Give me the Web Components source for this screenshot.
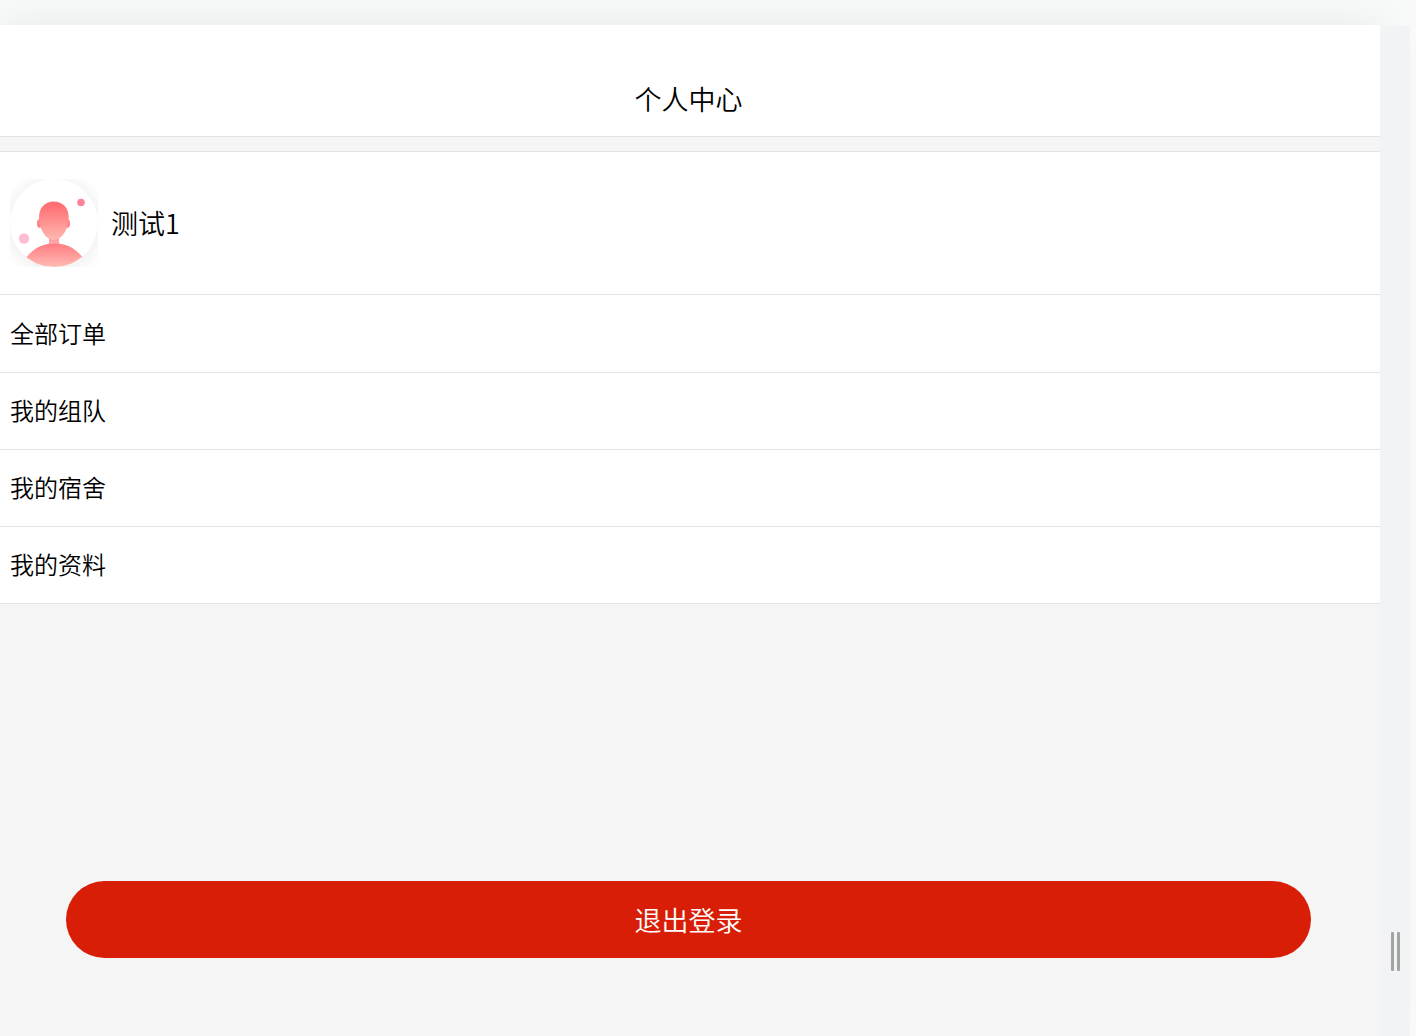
<!DOCTYPE html>
<html lang="zh-CN">
<head>
<meta charset="utf-8">
<meta name="viewport" content="width=device-width, initial-scale=1">
<title>个人中心</title>
<style>
html, body { margin: 0; }
body { background: #f8faf9; color: #000; font-family: "Noto Sans CJK SC", sans-serif; font-weight: 350; overflow-x: hidden; }
</style>
</head>
<body>
<app-frame>
  <page-header>个人中心</page-header>
  <menu-group>
    <user-profile><user-avatar slot="avatar"></user-avatar>测试1</user-profile>
    <menu-list>
      <menu-row href="#orders">全部订单</menu-row>
      <menu-row href="#team">我的组队</menu-row>
      <menu-row href="#dorm">我的宿舍</menu-row>
      <menu-row href="#info">我的资料</menu-row>
    </menu-list>
  </menu-group>
  <logout-button>退出登录</logout-button>
  <resize-handle slot="aside"></resize-handle>
</app-frame>
<script>
function define(name, markup) {
  customElements.define(name, class extends HTMLElement {
    constructor() {
      super();
      this.attachShadow({ mode: "open" }).innerHTML = markup;
      const link = this.shadowRoot.querySelector("a");
      if (link) link.href = this.getAttribute("href") || "#";
    }
  });
}

define("app-frame", `
<style>
:host { display: flex; box-sizing: border-box; min-height: 100vh; padding: 25px 6px 0 0; overflow: hidden; }
main { flex: 1; min-width: 0; background: #f5f5f5; box-shadow: 0 0 40px rgba(0, 0, 0, .07); }
aside { position: relative; display: flex; margin-top: 1px; }
</style>
<main><slot></slot></main>
<aside><slot name="aside"></slot></aside>`);

define("page-header", `
<style>
:host { display: block; background: #fff; border-bottom: 1px solid #e3e3e3; padding: 54px 3px 17px 0; }
h1 { margin: 0; font-size: 27px; line-height: 40px; font-weight: inherit; text-align: center; }
</style>
<h1><slot></slot></h1>`);

define("menu-group", `
<style>
:host { display: block; margin-top: 14px; background: #fff; border-top: 1px solid #e3e3e3; }
</style>
<slot></slot>`);

define("user-profile", `
<style>
:host { display: flex; align-items: center; gap: 13px; padding: 27px 10px; font-size: 27px; line-height: 40px; border-bottom: 1px solid #e3e3e3; }
</style>
<slot name="avatar"></slot><span><slot></slot></span>`);

define("user-avatar", `
<style>
:host { display: block; width: 88px; height: 88px; }
svg { display: block; width: 100%; height: 100%; }
</style>
<svg viewBox="0 0 88 88" aria-hidden="true">
  <defs>
    <radialGradient id="halo" gradientUnits="userSpaceOnUse" cx="44" cy="46" r="58">
      <stop offset=".72" stop-color="#f3f3f3"/><stop offset=".98" stop-color="#ffffff"/>
    </radialGradient>
    <linearGradient id="face" x1="0" y1="0" x2="0" y2="1">
      <stop offset=".12" stop-color="#ff7075"/><stop offset="1" stop-color="#ffb9b2"/>
    </linearGradient>
    <linearGradient id="body" gradientUnits="userSpaceOnUse" x1="0" y1="64" x2="0" y2="88">
      <stop offset="0" stop-color="#ff7b80"/><stop offset="1" stop-color="#ffbbb4"/>
    </linearGradient>
    <linearGradient id="neck" x1="0" y1="0" x2="0" y2="1">
      <stop offset="0" stop-color="#ff8a90"/><stop offset="1" stop-color="#fdb0b4"/>
    </linearGradient>
    <clipPath id="disc"><circle cx="44" cy="44" r="44"/></clipPath>
  </defs>
  <rect width="88" height="88" fill="url(#halo)"/>
  <circle cx="44" cy="44" r="44" fill="#fff"/>
  <circle cx="71" cy="23.500" r="3.800" fill="#ff829b"/>
  <circle cx="14" cy="59.500" r="5.200" fill="#ffbdd4"/>
  <path d="M39 56H49V63L50 66H38L39 63Z" fill="url(#neck)"/>
  <ellipse cx="29.500" cy="44.500" rx="2.500" ry="4.300" fill="#ff7e84"/>
  <ellipse cx="57.500" cy="44.500" rx="2.500" ry="4.300" fill="#ff7e84"/>
  <path d="M43.700 22.500C53 22.500 58.700 29.500 58.700 38C58.700 50 52 61 43.700 61C35.500 61 29 50 29 38C29 29.500 34.500 22.500 43.700 22.500Z" fill="url(#face)"/>
  <path clip-path="url(#disc)" d="M15 80C23 69.500 32 64.500 44.500 64.500C57 64.500 66 69.500 74 80V89H15Z" fill="url(#body)"/>
</svg>`);

define("menu-list", `
<style>
:host { display: block; padding-top: 1px; }
nav { display: flex; flex-direction: column; }
</style>
<nav><slot></slot></nav>`);

define("menu-row", `
<style>
:host { display: block; border-bottom: 1px solid #e3e3e3; }
a { display: block; padding: 19px 10px 21px; font-size: 24px; line-height: 36px; color: inherit; text-decoration: none; }
</style>
<a><slot></slot></a>`);

define("logout-button", `
<style>
:host { display: block; padding: 277px 69px 78px 66px; }
button { display: block; width: 100%; margin: 0; padding: 19px 24px 18px; border: 0; border-radius: 39px; background: #d81e06; color: #fff; font: inherit; font-size: 27px; line-height: 40px; cursor: pointer; }
</style>
<button type="button"><slot></slot></button>`);

define("resize-handle", `
<style>
:host { display: flex; align-items: flex-end; background: #f1f3f5; }
button { display: flex; justify-content: center; gap: 3px; width: 30px; padding: 0 0 65px; border: 0; background: none; cursor: ew-resize; }
i { width: 3px; height: 39px; border-radius: 1px; background: #a3a3a3; }
</style>
<button type="button" aria-label="调整宽度"><i></i><i></i></button>`);
</script>
</body>
</html>
